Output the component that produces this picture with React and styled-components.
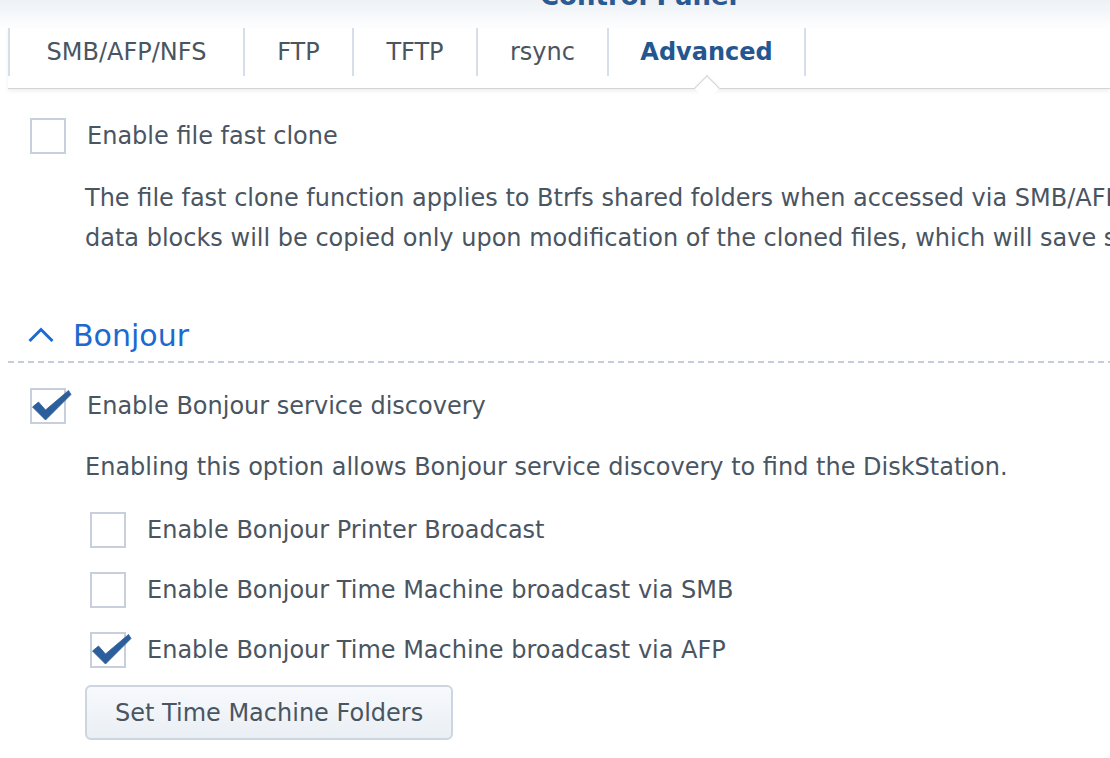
import styled, { createGlobalStyle } from "styled-components";

const GlobalStyle = createGlobalStyle`
  html, body {
    margin: 0;
    padding: 0;
    background: #fff;
  }
  body {
    font-family: "DejaVu Sans", Verdana, sans-serif;
    color: #4a5562;
    overflow: hidden;
  }
`;

const Window = styled.div`
  width: 1110px;
  height: 758px;
  overflow: hidden;
  display: flex;
  flex-direction: column;
`;

const TitleBar = styled.div`
  height: 28px;
  overflow: hidden;
  background: linear-gradient(to bottom, #edf1f5, #fdfeff);
  padding-left: 540px;
`;

const Title = styled.div`
  margin-top: -17px;
  font-size: 26px;
  line-height: 26px;
  font-weight: bold;
  color: #2a5a92;
  white-space: nowrap;
`;

const Panel = styled.div`
  margin-left: 8px;
  display: flex;
  flex-direction: column;
`;

const TabBar = styled.div`
  display: flex;
  height: 60px;
  border-bottom: 1px solid #d2d4d6;
  box-shadow: 0 2px 4px rgba(0, 0, 0, 0.07);
`;

const Tab = styled.div`
  position: relative;
  width: ${(p) => p.$w}px;
  height: 48px;
  box-sizing: border-box;
  border-left: 2px solid #d6dee9;
  display: flex;
  align-items: center;
  justify-content: center;
  font-size: 24px;
  white-space: nowrap;
  color: ${(p) => (p.$active ? "#24578f" : "#4a5562")};
  font-weight: ${(p) => (p.$active ? "bold" : "normal")};

  &:last-child {
    border-right: 2px solid #d6dee9;
  }
`;

const Notch = styled.span`
  position: absolute;
  left: 50%;
  bottom: -21px;
  width: 17px;
  height: 17px;
  margin-left: -9px;
  background: #fff;
  border-top: 1px solid #d2d4d6;
  border-left: 1px solid #d2d4d6;
  transform: rotate(45deg);
  box-shadow: -1px -1px 2px rgba(0, 0, 0, 0.04);
`;

const Content = styled.div`
  padding: 29px 0 0 22px;
  display: flex;
  flex-direction: column;
`;

const Row = styled.label`
  display: flex;
  align-items: center;
  gap: 21px;
  height: 36px;
  font-size: 24px;
  white-space: nowrap;
  margin-left: ${(p) => p.$indent || 0}px;
  margin-top: ${(p) => p.$top || 0}px;
`;

const Box = styled.span`
  position: relative;
  flex: none;
  width: 36px;
  height: 36px;
  box-sizing: border-box;
  border: 2px solid #c6cfdb;
  background: #fff;

  svg {
    position: absolute;
    left: -2px;
    top: -2px;
    overflow: visible;
  }
`;

const Desc = styled.div`
  margin-left: 55px;
  margin-top: ${(p) => p.$top || 0}px;
  font-size: 24px;
  line-height: 40px;
  white-space: nowrap;
`;

const SectionHead = styled.div`
  margin-top: 57px;
  margin-left: -22px;
  padding-left: 20px;
  display: flex;
  align-items: center;
  gap: 19px;
  height: 40px;
  padding-bottom: 6px;
  font-size: 30px;
  color: #1c6ad0;
`;

const Dashed = styled.div`
  margin-left: -22px;
  height: 2px;
  background: repeating-linear-gradient(
    to right,
    #c6cdd8 0 6px,
    transparent 6px 10px
  );
`;

const Button = styled.button`
  align-self: flex-start;
  margin: 17px 0 0 55px;
  height: 55px;
  padding: 0 28px;
  border: 2px solid #ccd5e0;
  border-radius: 6px;
  background: linear-gradient(to bottom, #f7f9fc, #eaeff5);
  font-family: "DejaVu Sans", Verdana, sans-serif;
  font-size: 24px;
  color: #4a5562;
`;

const Check = () => (
  <svg width="36" height="36" viewBox="0 0 36 36">
    <path
      d="M2.5 19 L8.5 14 L15.5 22 L38.5 2.5 L41 6.5 L15.5 32 Z"
      fill="#2c5e9b"
      stroke="#2c5e9b"
      strokeWidth="0.8"
      strokeLinejoin="round"
    />
  </svg>
);

const Checkbox = ({ checked }) => <Box>{checked && <Check />}</Box>;

const ChevronUp = () => (
  <svg width="26" height="16" viewBox="0 0 26 16">
    <path
      d="M1.5 14 L13 2.5 L24.5 14"
      fill="none"
      stroke="#1c6ad0"
      strokeWidth="3"
    />
  </svg>
);

const tabs = [
  { label: "SMB/AFP/NFS", w: 235 },
  { label: "FTP", w: 109 },
  { label: "TFTP", w: 124 },
  { label: "rsync", w: 131 },
  { label: "Advanced", w: 199, active: true },
];

export default function App() {
  return (
    <>
      <GlobalStyle />
      <Window>
        <TitleBar>
          <Title>Control Panel</Title>
        </TitleBar>
        <Panel>
          <TabBar>
            {tabs.map((t) => (
              <Tab key={t.label} $w={t.w} $active={t.active}>
                {t.label}
                {t.active && <Notch />}
              </Tab>
            ))}
          </TabBar>
          <Content>
            <Row>
              <Checkbox />
              Enable file fast clone
            </Row>
            <Desc $top={24}>
              The file fast clone function applies to Btrfs shared folders when
              accessed via SMB/AFP, Finder and File Station. The
              <br />
              data blocks will be copied only upon modification of the cloned
              files, which will save storage space.
            </Desc>

            <SectionHead>
              <ChevronUp />
              Bonjour
            </SectionHead>
            <Dashed />

            <Row $top={25}>
              <Checkbox checked />
              Enable Bonjour service discovery
            </Row>
            <Desc $top={23}>
              Enabling this option allows Bonjour service discovery to find the
              DiskStation.
            </Desc>

            <Row $indent={60} $top={25}>
              <Checkbox />
              Enable Bonjour Printer Broadcast
            </Row>
            <Row $indent={60} $top={24}>
              <Checkbox />
              Enable Bonjour Time Machine broadcast via SMB
            </Row>
            <Row $indent={60} $top={24}>
              <Checkbox checked />
              Enable Bonjour Time Machine broadcast via AFP
            </Row>

            <Button>Set Time Machine Folders</Button>
          </Content>
        </Panel>
      </Window>
    </>
  );
}
